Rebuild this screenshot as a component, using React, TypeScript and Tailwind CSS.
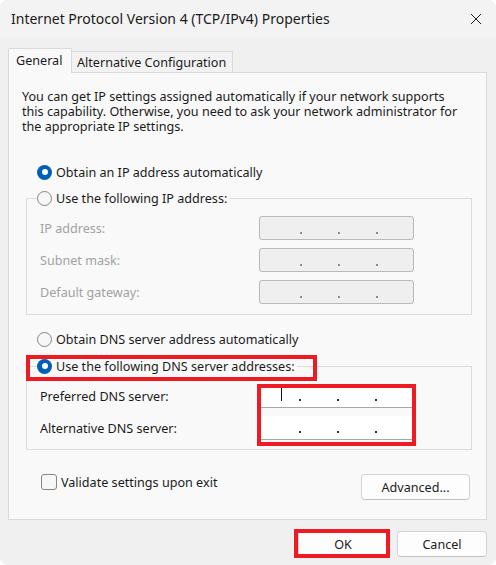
import React from 'react';

const FONT = 'font-["Segoe_UI","Noto_Sans",sans-serif]';

const Radio: React.FC<{ checked?: boolean }> = ({ checked }) =>
  checked ? (
    <span className="w-[15px] h-[15px] rounded-full bg-[#005fb8] flex items-center justify-center shrink-0">
      <span className="w-[6px] h-[6px] rounded-full bg-white" />
    </span>
  ) : (
    <span className="w-[15px] h-[15px] rounded-full border border-[#858585] bg-[#f7f7f7] shrink-0" />
  );

const RadioRow: React.FC<{ checked?: boolean; label: string }> = ({ checked, label }) => (
  <span className="flex items-center gap-[4px] h-[16px] text-[#1b1b1b]">
    <Radio checked={checked} />
    <span>{label}</span>
  </span>
);

// the three separators of an IPv4 box
const Dots: React.FC<{ cursor?: boolean; color: string }> = ({ cursor, color }) => (
  <div className="flex items-start h-full pl-[22px]">
    <span className={`w-[1px] h-[14px] mt-[3px] ${cursor ? 'bg-[#111]' : ''}`} />
    <span className={`w-[2px] h-[2px] mt-[15px] ml-[17px] ${color}`} />
    <span className={`w-[2px] h-[2px] mt-[15px] ml-[36px] ${color}`} />
    <span className={`w-[2px] h-[2px] mt-[15px] ml-[36px] ${color}`} />
  </div>
);

const FieldRow: React.FC<{ label: string; disabled?: boolean; cursor?: boolean }> = ({
  label,
  disabled,
  cursor,
}) => (
  <div className="flex items-center h-[24px] pl-[13px]">
    <span className={`w-[219px] ${disabled ? 'text-[#a2a2a2]' : 'text-[#1b1b1b]'}`}>{label}</span>
    {disabled ? (
      <div className="w-[155px] h-[24px] rounded-[3px] border border-[#b9b9b9] bg-[#efefef]">
        <Dots color="bg-[#8c8c8c]" />
      </div>
    ) : (
      <div className="w-[155px] h-[24px] border-b border-[#a8a8a8] bg-white">
        <Dots cursor={cursor} color="bg-[#333]" />
      </div>
    )}
  </div>
);

const Button: React.FC<{ label: string; className?: string }> = ({ label, className }) => (
  <button
    className={`h-[26px] rounded-[4px] border border-[#d3d3d3] border-b-[#c2c2c2] bg-[#fdfdfd] text-[#1b1b1b] ${className ?? ''}`}
  >
    {label}
  </button>
);

export default function App() {
  return (
    <div className={`w-[496px] h-[565px] bg-white ${FONT} text-[12.6px] leading-[15px]`}>
      <div className="relative w-[496px] h-[565px] bg-[#f0f0f0] rounded-[8px] overflow-hidden">
        {/* title bar */}
        <div className="h-[37px] bg-[#f3f3f3] flex items-center justify-between pl-[11px] pr-[14px]">
          <span className="text-[14px] text-[#1b1b1b]">Internet Protocol Version 4 (TCP/IPv4) Properties</span>
          <svg width="12" height="12" viewBox="0 0 12 12" className="text-[#1b1b1b]">
            <path d="M1 1 L11 11 M11 1 L1 11" stroke="currentColor" strokeWidth="1" fill="none" />
          </svg>
        </div>

        {/* tabs */}
        <div className="mt-[11px] ml-[8px] flex items-end">
          <div className="relative z-10 -mb-px h-[25px] w-[64px] bg-[#f9f9f9] border border-b-0 border-[#dadada] rounded-t-[2px] pl-[7px] flex items-start pt-[4px] text-[#1b1b1b]">
            General
          </div>
          <div className="h-[21px] w-[161px] border-t border-r border-[#dadada] bg-[#f2f2f2] pl-[5px] pt-[3px] text-[#1b1b1b] whitespace-nowrap">
            Alternative Configuration
          </div>
        </div>

        {/* panel */}
        <div className="ml-[8px] w-[479px] h-[448px] border border-[#dadada] bg-[#f9f9f9] pt-[16px] px-[13px] flex flex-col">
          <p className="text-[#1b1b1b] w-[440px]">
            You can get IP settings assigned automatically if your network supports this capability. Otherwise, you
            need to ask your network administrator for the appropriate IP settings.
          </p>

          <div className="mt-[30px] ml-[15px]">
            <RadioRow checked label="Obtain an IP address automatically" />
          </div>

          <fieldset className="mt-[10px] ml-[4px] w-[446px] border border-[#dcdcdc] pt-[10px] pb-[10px] flex flex-col gap-[8px]">
            <legend className="ml-[10px] pr-[2px]">
              <RadioRow label="Use the following IP address:" />
            </legend>
            <FieldRow disabled label="IP address:" />
            <FieldRow disabled label="Subnet mask:" />
            <FieldRow disabled label="Default gateway:" />
          </fieldset>

          <div className="mt-[16px] ml-[15px]">
            <RadioRow label="Obtain DNS server address automatically" />
          </div>

          <fieldset className="mt-[11px] ml-[4px] w-[446px] border border-[#dcdcdc] pt-[10px] pb-[9px] flex flex-col gap-[8px]">
            <legend className="ml-[10px] pr-[2px]">
              <RadioRow checked label="Use the following DNS server addresses:" />
            </legend>
            <FieldRow cursor label="Preferred DNS server:" />
            <FieldRow label="Alternative DNS server:" />
          </fieldset>

          <div className="mt-[24px] flex items-start justify-between pl-[19px] pr-[3px]">
            <label className="flex items-center gap-[4px] h-[16px] text-[#1b1b1b]">
              <span className="w-[16px] h-[16px] rounded-[3px] border border-[#858585] bg-[#f7f7f7]" />
              Validate settings upon exit
            </label>
            <Button label="Advanced..." className="w-[109px]" />
          </div>
        </div>

        {/* dialog buttons */}
        <div className="mt-[11px] pr-[9px] flex justify-end gap-[9px]">
          <Button label="OK" className="w-[90px] h-[25px]" />
          <Button label="Cancel" className="w-[90px] h-[25px]" />
        </div>

        {/* red highlight annotations */}
        <div className="absolute left-[26px] top-[355px] w-[291px] h-[26px] border-[4px] border-[#ed1c24]" />
        <div className="absolute left-[257px] top-[384px] w-[159px] h-[62px] border-[4px] border-[#ed1c24]" />
        <div className="absolute left-[294px] top-[529px] w-[96px] h-[29px] border-[4px] border-[#ed1c24]" />
      </div>
    </div>
  );
}
